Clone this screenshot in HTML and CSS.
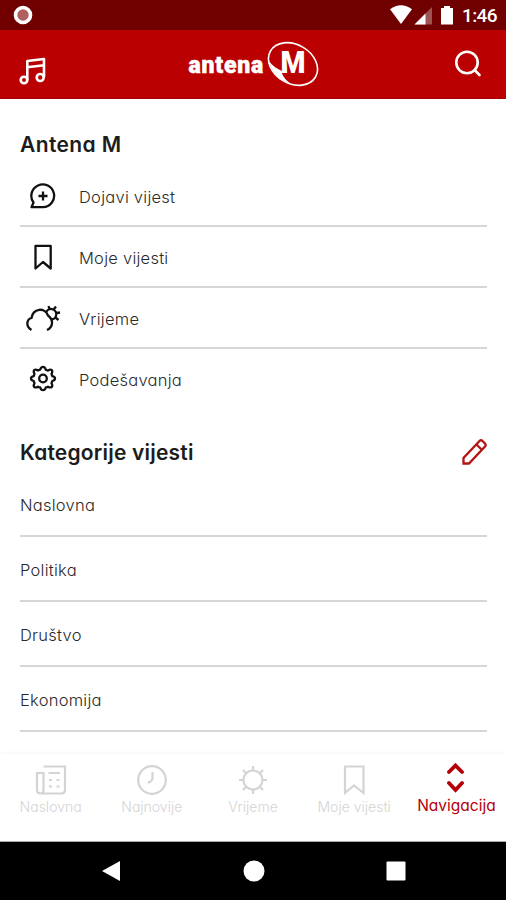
FILE: index.html
```html
<!DOCTYPE html>
<html lang="sr-Latn-ME">
<head>
<meta charset="utf-8">
<title>Antena M</title>
<link rel="stylesheet" href="styles.css">
</head>
<body>
<div class="status">
  <svg class="rec" width="20" height="20" viewBox="0 0 20 20"><circle cx="10" cy="10" r="7.500" fill="#b06060" stroke="#fff" stroke-width="3.600"/></svg>
  <div class="status-right">
    <svg width="64" height="20" viewBox="0 0 64 20" fill="#fff"><path d="M0 4.200Q11-3.500 22 4.200L11 19Z"/><path d="M24.500 19.500L42 2V19.500Z" opacity=".32"/><path d="M24.500 19.500L35.500 8.500V19.500Z"/><path d="M51 3H54V1H60V3H63V19.500H51Z"/></svg>
    <span class="time">1:46</span>
  </div>
</div>
<header class="header">
  <svg class="music" width="28" height="28" viewBox="0 0 28 28" fill="none" stroke="#fff" stroke-width="2.600" stroke-linejoin="round"><path d="M8.300 23V4L25 2V20M8.300 10.200L25 8.200"/><circle cx="5" cy="23" r="3.300"/><circle cx="21.200" cy="20.500" r="3.500"/></svg>
  <div class="logo">
    <span class="logo-text">antena</span>
    <svg width="54" height="48" viewBox="0 0 54 48"><ellipse cx="27" cy="24" rx="26" ry="19.500" transform="rotate(30 27 24)" fill="none" stroke="#fff" stroke-width="1.600"/><path d="M3 21Q7 27 16 31V33.500Q18 39 25 44Q7 38 3 21Z" fill="#fff"/><text class="logo-m" x="14.500" y="33" textLength="25" lengthAdjust="spacingAndGlyphs">M</text></svg>
  </div>
  <svg class="search" width="28" height="28" viewBox="0 0 28 28" fill="none" stroke="#fff" stroke-width="2.600" stroke-linecap="round"><circle cx="13" cy="12.500" r="10.700"/><path d="M20.500 20L25.500 25"/></svg>
</header>
<main class="main">
  <h2 class="title">Antena M</h2>
  <ul class="list">
    <li class="item"><span class="icon"><svg width="28" height="28" viewBox="0 0 28 28"><path d="M2.500 25.200L4.500 20.500A11.400 11.400 0 1 1 14 25.200Z"/><path d="M14 9.500V18.500M9.500 14H18.500"/></svg></span><span class="label">Dojavi vijest</span></li>
    <li class="item"><span class="icon"><svg width="28" height="28" viewBox="0 0 28 28"><path d="M6.500 2.800H21.700V25.500L14 19L6.500 25.500Z"/></svg></span><span class="label">Moje vijesti</span></li>
    <li class="item"><span class="icon"><svg width="36" height="28" viewBox="0 0 36 28"><path d="M6.500 26C0 22 2 15 6.500 14C8 4 20 3 23 11.500C29 16 28 23 22 26"/><path d="M21 8.500A5.300 5.300 0 1 1 26.500 15.500M24.500 5L23.500 2M29 5L31 2.500M31.500 9L35 8.500M30.500 13.500L33.500 16"/></svg></span><span class="label">Vrijeme</span></li>
    <li class="item"><span class="icon up"><svg width="28" height="28" viewBox="0 0 28 28"><path d="M14 2.800Q16 2.800 16.800 5.700Q18 6.300 19 6.500Q21.500 5 22.800 6.200Q23.900 7.500 22.500 10Q23 11 23.300 12.200Q26 12.800 26 14.600Q26 16.300 23.300 17Q23 18.200 22.500 19.200Q23.900 21.700 22.800 22.900Q21.500 24.100 19 22.700Q18 23.300 16.800 23.500Q16 26.200 14 26.200Q12 26.200 11.200 23.500Q10 23.300 9 22.700Q6.500 24.100 5.200 22.900Q4.100 21.700 5.500 19.200Q5 18.200 4.700 17Q2 16.300 2 14.600Q2 12.800 4.700 12.200Q5 11 5.500 10Q4.100 7.500 5.200 6.200Q6.500 5 9 6.500Q10 6 11.200 5.700Q12 2.800 14 2.800Z"/><circle cx="14" cy="14.500" r="3.800"/></svg></span><span class="label">Podešavanja</span></li>
  </ul>
  <div class="section-head">
    <h2 class="title wide">Kategorije vijesti</h2>
    <svg class="pencil" width="27" height="28" viewBox="0 0 27 28"><path d="M3.500 25.500V20L19.500 3Q21 1.500 22.500 3L25 5.500Q26.300 7 25 8.500L9 25.500ZM16.500 6.500L21.500 11.500"/></svg>
  </div>
  <ul class="list">
    <li class="item category">Naslovna</li>
    <li class="item category">Politika</li>
    <li class="item category">Društvo</li>
    <li class="item category">Ekonomija</li>
  </ul>
</main>
<nav class="tabs">
  <a class="tab"><svg width="32" height="32" viewBox="0 0 32 32"><path d="M8.500 2.500H30V26Q30 29.500 26.500 29.500H5.500Q2 29.500 2 26V9H8.500V26Q8.500 29.500 5.500 29.500M13.500 9H25M14 16H17M21.500 16H24.500M14 22.500H17M21.500 22.500H24.500"/></svg><span>Naslovna</span></a>
  <a class="tab"><svg width="32" height="32" viewBox="0 0 32 32"><circle cx="16" cy="16" r="13.800"/><path d="M16.500 8V14Q16.500 17 12 19"/></svg><span>Najnovije</span></a>
  <a class="tab"><svg width="32" height="32" viewBox="0 0 32 32"><circle cx="16" cy="16" r="9.500"/><path d="M16 2V6M16 26V30M2 16H6M26 16H30M6 6L9 9M23 23L26 26M6 26L9 23M23 9L26 6"/></svg><span>Vrijeme</span></a>
  <a class="tab"><svg width="32" height="32" viewBox="0 0 32 32"><path d="M7 2.500H25.500V29L16 21.500L7 29Z"/></svg><span>Moje vijesti</span></a>
  <a class="tab active"><svg width="32" height="32" viewBox="0 0 32 32"><path d="M10 9L16.500 2.500L23 9M10 20L16.500 27L23 20"/></svg><span>Navigacija</span></a>
</nav>
<div class="system">
  <svg width="20" height="22" viewBox="0 0 20 22"><path d="M19 1V21L1 11Z"/></svg>
  <svg width="22" height="22" viewBox="0 0 22 22"><circle cx="11" cy="11" r="10.500"/></svg>
  <svg width="20" height="20" viewBox="0 0 20 20"><rect x=".5" y=".5" width="19" height="19" rx="1"/></svg>
</div>
</body>
</html>
```
FILE: styles.css
```css
* { box-sizing: border-box; }
body {
  margin: 0;
  width: 506px;
  height: 900px;
  overflow: hidden;
  display: flex;
  flex-direction: column;
  background: #fff;
  color: #2a2a2a;
  font-family: Inter, Lato, sans-serif;
  font-feature-settings: "cv11";
}
svg { display: block; flex: none; }
.status {
  height: 30px;
  flex: none;
  display: flex;
  align-items: center;
  justify-content: space-between;
  padding: 0 9px 0 13px;
  background: #700000;
}
.status-right { display: flex; align-items: center; gap: 8px; }
.time {
  font: 500 19px/30px Roboto, sans-serif;
  color: #fff;
  width: 35px;
  padding-top: 1px;
  letter-spacing: -.6px;
}
.header {
  height: 69px;
  flex: none;
  display: flex;
  align-items: center;
  justify-content: space-between;
  padding: 0 24px 0 19px;
  background: #ba0000;
  border-bottom: 1px solid #a80000;
}
.music { margin-top: 14px; }
.logo { display: flex; align-items: center; margin-left: 7px; }
.logo-text {
  width: 77px;
  padding-top: 3px;
  font: 900 23px/30px Roboto, sans-serif;
  color: #fff;
  letter-spacing: .8px;
  -webkit-text-stroke: .5px #fff;
}
.logo-m { font: 900 31px Roboto, sans-serif; fill: #fff; }
.main { height: 655px; flex: none; padding: 29px 19px 0 20px; overflow: hidden; }
.title {
  margin: 0;
  padding-top: 1px;
  font-size: 21px;
  line-height: 32px;
  font-weight: 600;
  letter-spacing: .4px;
  color: #1c1c1c;
}
.wide { letter-spacing: .2px; }
.list { list-style: none; margin: 0; padding: 0; }
.main > .title { margin-bottom: 5px; }
.item {
  height: 61px;
  display: flex;
  align-items: center;
  border-bottom: 2px solid #d6d6d6;
  font-size: 16.500px;
  letter-spacing: .25px;
  font-weight: 300;
}
.item:nth-child(4):not(.category) { border-bottom-color: transparent; }
.label { padding-top: 2px; }
.icon { width: 46px; margin-right: 13px; display: flex; justify-content: center; }
.up { padding-bottom: 2px; }
.icon svg { fill: none; stroke: #111; stroke-width: 2.3; stroke-linejoin: round; }
.section-head { display: flex; align-items: center; justify-content: space-between; height: 32px; margin: 26px 0 4px; }
.pencil { fill: none; stroke: #b51414; stroke-width: 2.3; }
.category { height: 65px; padding-top: 2px; }
.tabs {
  height: 88px;
  flex: none;
  display: grid;
  grid-template-columns: repeat(5, 1fr);
  padding-top: 10px;
  background: #fff;
  box-shadow: 0 -1px 4px rgba(0,0,0,.04);
  border-bottom: 1px solid #aaa;
}
.tab {
  display: flex;
  flex-direction: column;
  align-items: center;
  color: #d4d4d4;
  font-size: 14px;
  font-weight: 300;
  line-height: 21px;
  white-space: nowrap;
}
.tab svg { fill: none; stroke: currentColor; stroke-width: 2.2; }
.active { color: #b50008; font-size: 15.500px; font-weight: 400; line-height: 21px; }
.active svg { stroke-width: 3.800; stroke-linecap: round; margin-top: -1px; }
.active span { margin-left: 2px; }
.system {
  flex: 1;
  background: #000;
  display: flex;
  align-items: center;
  justify-content: space-between;
  padding: 0 100px 0 101px;
}
.system svg { fill: #fff; }
```
